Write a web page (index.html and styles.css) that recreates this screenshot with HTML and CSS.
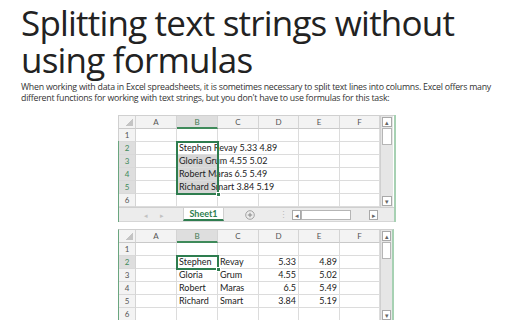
FILE: index.html
```html
<!DOCTYPE html>
<html lang="en">
<head>
  <meta charset="UTF-8">
  <title>Splitting text strings without using formulas</title>
  <link rel="stylesheet" href="styles.css">
</head>
<body>
  <h1 class="title">Splitting text strings without using formulas</h1>
  <p class="lead">When working with data in Excel spreadsheets, it is sometimes necessary to split text lines into columns. Excel offers many different functions for working with text strings, but you don't have to use formulas for this task:</p>

  <!-- Before: everything in column B -->
  <div class="sheet sheet-before">
    <div class="sheet-body">
      <div class="grid">
        <div class="corner"><span class="corner-mark"></span></div>
        <div class="col-head">A</div>
        <div class="col-head col-active">B</div>
        <div class="col-head">C</div>
        <div class="col-head">D</div>
        <div class="col-head">E</div>
        <div class="col-head">F</div>

        <div class="row-head">1</div>
        <div class="cell"></div><div class="cell"></div><div class="cell"></div><div class="cell"></div><div class="cell"></div><div class="cell"></div>

        <div class="row-head row-active">2</div>
        <div class="cell"></div>
        <div class="cell cell-spill">Stephen Revay 5.33 4.89</div>
        <div class="cell"></div><div class="cell"></div>

        <div class="row-head row-active">3</div>
        <div class="cell"></div>
        <div class="cell cell-spill cell-shaded">Gloria Grum 4.55 5.02</div>
        <div class="cell"></div><div class="cell"></div>

        <div class="row-head row-active">4</div>
        <div class="cell"></div>
        <div class="cell cell-spill cell-shaded">Robert Maras 6.5 5.49</div>
        <div class="cell"></div><div class="cell"></div>

        <div class="row-head row-active">5</div>
        <div class="cell"></div>
        <div class="cell cell-spill cell-shaded">Richard Smart 3.84 5.19</div>
        <div class="cell"></div><div class="cell"></div>

        <div class="row-head">6</div>
        <div class="cell"></div><div class="cell"></div><div class="cell"></div><div class="cell"></div><div class="cell"></div><div class="cell"></div>

        <div class="selection selection-tall"><span class="handle"></span></div>
      </div>
      <div class="vscroll">
        <div class="arrow-box">&#9652;</div>
        <div class="vthumb"></div>
        <div class="track"></div>
        <div class="arrow-box">&#9662;</div>
      </div>
    </div>
    <div class="tabbar">
      <div class="tab-nav"><span>&#9666;</span><span>&#9656;</span></div>
      <div class="tab">Sheet1</div>
      <div class="tab-add">
        <svg width="10" height="10" viewBox="0 0 10 10">
          <circle cx="5" cy="5" r="4.3" fill="none" stroke="#9a9a9a" stroke-width="0.9"/>
          <path d="M5 2.8v4.4M2.8 5h4.4" stroke="#8a8a8a" stroke-width="1"/>
        </svg>
      </div>
      <div class="tab-split">&#8942;</div>
      <div class="hscroll">
        <div class="arrow-box">&#9666;</div>
        <div class="hthumb"></div>
        <div class="track"></div>
        <div class="arrow-box">&#9656;</div>
      </div>
    </div>
  </div>

  <!-- After: split into columns -->
  <div class="sheet sheet-after">
    <div class="sheet-body">
      <div class="grid">
        <div class="corner"><span class="corner-mark"></span></div>
        <div class="col-head">A</div>
        <div class="col-head col-active">B</div>
        <div class="col-head">C</div>
        <div class="col-head">D</div>
        <div class="col-head">E</div>
        <div class="col-head">F</div>

        <div class="row-head">1</div>
        <div class="cell"></div><div class="cell"></div><div class="cell"></div><div class="cell"></div><div class="cell"></div><div class="cell"></div>

        <div class="row-head row-active">2</div>
        <div class="cell"></div><div class="cell">Stephen</div><div class="cell">Revay</div>
        <div class="cell num">5.33</div><div class="cell num">4.89</div><div class="cell"></div>

        <div class="row-head">3</div>
        <div class="cell"></div><div class="cell">Gloria</div><div class="cell">Grum</div>
        <div class="cell num">4.55</div><div class="cell num">5.02</div><div class="cell"></div>

        <div class="row-head">4</div>
        <div class="cell"></div><div class="cell">Robert</div><div class="cell">Maras</div>
        <div class="cell num">6.5</div><div class="cell num">5.49</div><div class="cell"></div>

        <div class="row-head">5</div>
        <div class="cell"></div><div class="cell">Richard</div><div class="cell">Smart</div>
        <div class="cell num">3.84</div><div class="cell num">5.19</div><div class="cell"></div>

        <div class="row-head">6</div>
        <div class="cell"></div><div class="cell"></div><div class="cell"></div><div class="cell"></div><div class="cell"></div><div class="cell"></div>

        <div class="selection selection-one"><span class="handle"></span></div>
      </div>
      <div class="vscroll">
        <div class="arrow-box">&#9652;</div>
        <div class="vthumb"></div>
        <div class="track"></div>
        <div class="arrow-box">&#9662;</div>
      </div>
    </div>
  </div>
</body>
</html>
```

FILE: styles.css
```css
* {
  box-sizing: border-box;
}

body {
  margin: 0;
  padding: 0 21px;
  font-family: 'Open Sans', 'DejaVu Sans', sans-serif;
  color: #2b2b2b;
  background: #fff;
  overflow: hidden;
}

.title {
  margin: 4px 0 0;
  font-size: 35px;
  font-weight: 400;
  line-height: 37px;
  color: #222;
  letter-spacing: -0.8px;
}

.lead {
  margin: 4px 0 0;
  font-size: 8.8px;
  line-height: 11px;
  letter-spacing: -0.25px;
  color: #333;
}

/* Spreadsheet frames */
.sheet {
  width: 276px;
  margin: 11px auto 0;
  border-top: 1px solid #cfcfcf;
  border-right: 2px solid #a7d1b3;
  border-left: 1px solid #6aa67f;
  font-family: Lato, 'Liberation Sans', sans-serif;
  font-size: 9px;
  color: #222;
  background: #fff;
}

.sheet-before {
  border-image: linear-gradient(to bottom, #d0d0d0 26px, #6aa67f 26px) 1;
  border-style: solid;
  border-width: 1px 0 0 1px;
  position: relative;
}

.sheet-before::after {
  content: "";
  position: absolute;
  top: -1px;
  right: -2px;
  bottom: 0;
  width: 2px;
  background: #a7d1b3;
}

.sheet-after {
  margin-top: 7px;
  position: relative;
}

.sheet-body {
  display: flex;
}

.grid {
  position: relative;
  display: grid;
  grid-template-columns: 17px 41px 41px 41px 40px 41px 40px;
  grid-auto-rows: 13px;
  width: 261px;
}

.corner,
.col-head,
.row-head {
  background: #f3f3f3;
  color: #555;
  font-size: 8px;
  display: flex;
  align-items: center;
  justify-content: center;
  border-right: 1px solid #d4d4d4;
  border-bottom: 1px solid #c9c9c9;
}

.corner {
  position: relative;
}

.corner-mark {
  position: absolute;
  right: 2px;
  bottom: 2px;
  width: 7px;
  height: 7px;
  background: linear-gradient(135deg, transparent 50%, #c4c4c4 50%);
}

.col-active {
  background: #dedede;
  color: #3f7a53;
  border-bottom: 2px solid #3f8a5a;
}

.row-head {
  border-bottom: 1px solid #d9d9d9;
}

.row-active {
  background: #dedede;
  color: #3f8a5a;
}

.cell {
  border-right: 1px solid #dcdcdc;
  border-bottom: 1px solid #dcdcdc;
  padding: 0 2px;
  line-height: 12px;
  white-space: nowrap;
}

.cell-spill {
  grid-column: span 3;
  overflow: visible;
}

.cell-shaded {
  background: linear-gradient(to right, #d6d6d6 41px, transparent 41px);
}

.num {
  text-align: right;
}

.selection {
  position: absolute;
  left: 57px;
  width: 43px;
  border: 2px solid #2e7d4f;
}

.selection-tall {
  top: 25px;
  height: 54px;
}

.selection-one {
  top: 25px;
  height: 15px;
}

.handle {
  position: absolute;
  right: -4px;
  bottom: -4px;
  width: 5px;
  height: 5px;
  background: #2e7d4f;
  border: 1px solid #fff;
}

/* Scrollbars */
.vscroll {
  width: 13px;
  display: flex;
  flex-direction: column;
  background: #e6e6e6;
  border-left: 1px solid #d0d0d0;
  padding: 1px;
}

.arrow-box {
  height: 10px;
  background: #fff;
  border: 1px solid #a9a9a9;
  color: #666;
  font-size: 7px;
  line-height: 8px;
  text-align: center;
}

.vthumb {
  height: 17px;
  margin-top: 1px;
  background: #fff;
  border: 1px solid #b5b5b5;
}

.track {
  flex: 1;
}

.tabbar {
  display: flex;
  align-items: stretch;
  height: 15px;
  background: #ececec;
  border-top: 1px solid #cfcfcf;
  border-bottom: 1px solid #d6d6d6;
}

.tab-nav {
  width: 64px;
  display: flex;
  justify-content: center;
  gap: 12px;
  color: #c2c2c2;
  font-size: 7px;
  line-height: 14px;
  padding-left: 6px;
}

.tab {
  width: 41px;
  background: #fff;
  border-left: 1px solid #cfcfcf;
  border-right: 1px solid #cfcfcf;
  border-bottom: 2px solid #2e7d4f;
  color: #2e7d4f;
  font-weight: 700;
  font-size: 9px;
  line-height: 12px;
  text-align: center;
}

.tab-add {
  width: 51px;
  display: flex;
  align-items: center;
  justify-content: center;
}

.tab-split {
  width: 17px;
  color: #bbb;
  font-size: 9px;
  line-height: 14px;
  text-align: center;
}

.hscroll {
  width: 86px;
  display: flex;
  align-items: center;
  gap: 0;
  padding: 2px 0;
}

.hscroll .arrow-box {
  width: 9px;
  height: 10px;
}

.hthumb {
  width: 50px;
  height: 10px;
  background: #fff;
  border: 1px solid #b5b5b5;
}
```
